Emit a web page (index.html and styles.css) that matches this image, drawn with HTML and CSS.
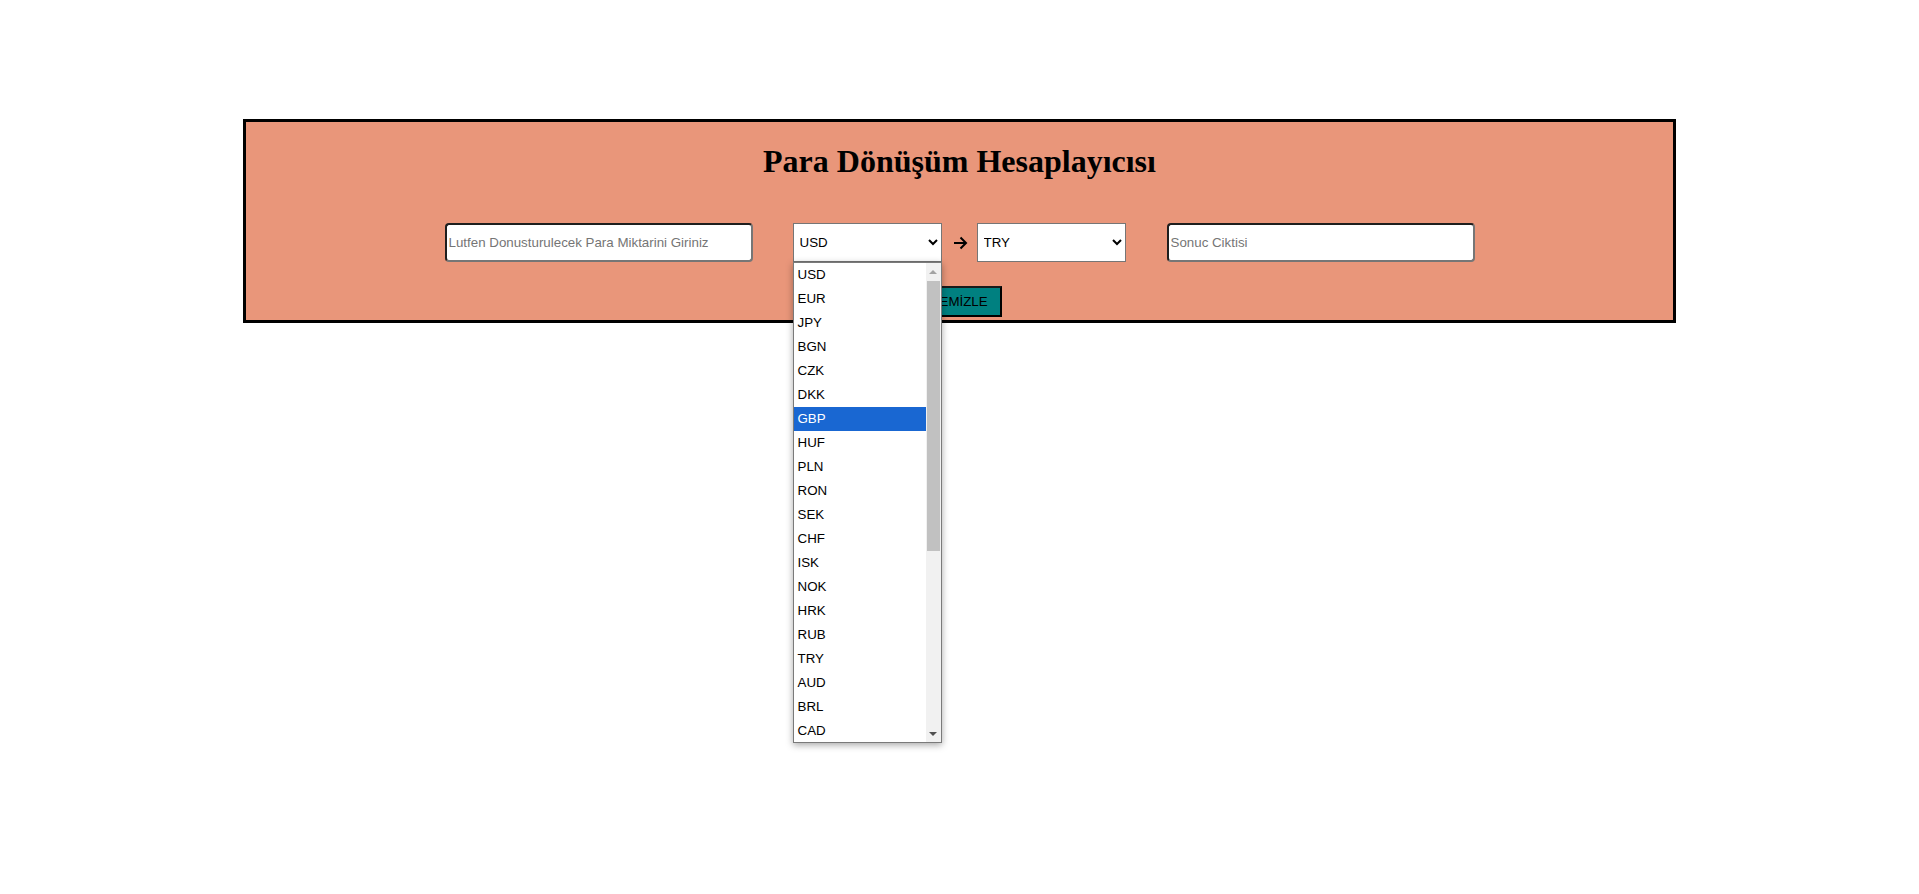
FILE: index.html
```html
<!DOCTYPE html>
<html lang="tr">
<head>
<meta charset="utf-8">
<title>Para Dönüşüm Hesaplayıcısı</title>
<link rel="stylesheet" href="styles.css">
</head>
<body>
<div class="container">
  <h1 class="title">Para Dönüşüm Hesaplayıcısı</h1>
  <div class="row">
    <input class="field" type="text" placeholder="Lutfen Donusturulecek Para Miktarini Giriniz">
    <div class="select-wrap">
      <select class="currency">
        <option>USD</option><option>EUR</option><option>JPY</option>
      </select>
      <div class="dropdown">
        <div class="options">
          <div class="opt">USD</div>
          <div class="opt">EUR</div>
          <div class="opt">JPY</div>
          <div class="opt">BGN</div>
          <div class="opt">CZK</div>
          <div class="opt">DKK</div>
          <div class="opt opt-active">GBP</div>
          <div class="opt">HUF</div>
          <div class="opt">PLN</div>
          <div class="opt">RON</div>
          <div class="opt">SEK</div>
          <div class="opt">CHF</div>
          <div class="opt">ISK</div>
          <div class="opt">NOK</div>
          <div class="opt">HRK</div>
          <div class="opt">RUB</div>
          <div class="opt">TRY</div>
          <div class="opt">AUD</div>
          <div class="opt">BRL</div>
          <div class="opt">CAD</div>
        </div>
        <div class="scrollbar">
          <div class="sb-btn"><span class="tri-up"></span></div>
          <div class="sb-track"><div class="sb-thumb"></div></div>
          <div class="sb-btn"><span class="tri-down"></span></div>
        </div>
      </div>
    </div>
    <svg class="arrow" width="15" height="14" viewBox="0 0 15 14" aria-hidden="true">
      <path d="M1 7 H13 M7.5 1.5 L13 7 L7.5 12.5" fill="none" stroke="#000" stroke-width="2"/>
    </svg>
    <select class="currency">
      <option>TRY</option><option>USD</option>
    </select>
    <input class="field field-out" type="text" placeholder="Sonuc Ciktisi">
  </div>
  <div class="btn-row">
    <button class="btn">TEMİZLE</button>
  </div>
</div>
</body>
</html>
```
FILE: styles.css
```css
html {
  background: #ffffff;
  height: 100%;
}
body {
  margin: 8px;
  min-height: calc(100% - 16px);
  font-family: "Liberation Serif", serif;
}
.container {
  position: relative;
  width: 75%;
  margin: 111px auto 0;
  border: 3px solid #000;
  background: #e9967a;
  text-align: center;
  padding-bottom: 3px;
}
.title {
  font-family: "Liberation Serif", serif;
  font-weight: bold;
  font-size: 32px;
  margin: 21.44px 0 0;
}
.row {
  display: flex;
  justify-content: center;
  align-items: center;
  margin-top: 43px;
  height: 39px;
  position: relative;
  z-index: 5;
}
.field {
  box-sizing: border-box;
  width: 308px;
  height: 39px;
  border: 2px solid;
  border-color: #1e1e1e #767676 #767676 #1e1e1e;
  border-radius: 4px;
  background: #fff;
  padding: 1px 2px;
  font-family: "Liberation Sans", Arial, sans-serif;
  font-size: 13.33px;
  color: #000;
}
.field::placeholder {
  color: #757575;
}
.field-out {
  margin-left: 41px;
}
.select-wrap {
  position: relative;
  margin-left: 40px;
  height: 39px;
}
.currency {
  box-sizing: border-box;
  width: 149px;
  height: 39px;
  border: 1px solid #767676;
  border-radius: 0;
  background: #fff;
  font-family: "Liberation Sans", Arial, sans-serif;
  font-size: 13.33px;
  color: #000;
  padding: 0 0 0 2px;
}
.arrow {
  margin: 0 9px 0 11px;
  display: block;
}
.dropdown {
  position: absolute;
  top: 100%;
  left: 0;
  z-index: 10;
  box-sizing: border-box;
  width: 149px;
  height: 481px;
  border: 1px solid #7a7a7a;
  background: #fff;
  box-shadow: 0 2px 7px rgba(0, 0, 0, 0.35);
  display: flex;
  text-align: left;
}
.options {
  flex: 1;
}
.opt {
  height: 24px;
  line-height: 24px;
  padding-left: 4px;
  font-family: "Liberation Sans", Arial, sans-serif;
  font-size: 13.33px;
  color: #000;
}
.opt-active {
  background: #1967d2;
  color: #fff;
}
.scrollbar {
  width: 15px;
  background: #f1f1f1;
  display: flex;
  flex-direction: column;
}
.sb-btn {
  height: 17px;
  display: flex;
  align-items: center;
  justify-content: center;
}
.tri-up {
  width: 0;
  height: 0;
  border-left: 4px solid transparent;
  border-right: 4px solid transparent;
  border-bottom: 4px solid #a3a3a3;
}
.tri-down {
  width: 0;
  height: 0;
  border-left: 4px solid transparent;
  border-right: 4px solid transparent;
  border-top: 4px solid #505050;
}
.sb-track {
  flex: 1;
  padding: 1px 1px 0;
}
.sb-thumb {
  height: 270px;
  background: #c1c1c1;
}
.btn-row {
  margin-top: 24px;
}
.btn {
  background: #008080;
  border: 2px solid;
  border-color: #1a1a1a #000 #000 #1a1a1a;
  border-radius: 0;
  padding: 6px 12px;
  font-family: "Liberation Sans", Arial, sans-serif;
  font-size: 13.33px;
  color: #000;
}
```
